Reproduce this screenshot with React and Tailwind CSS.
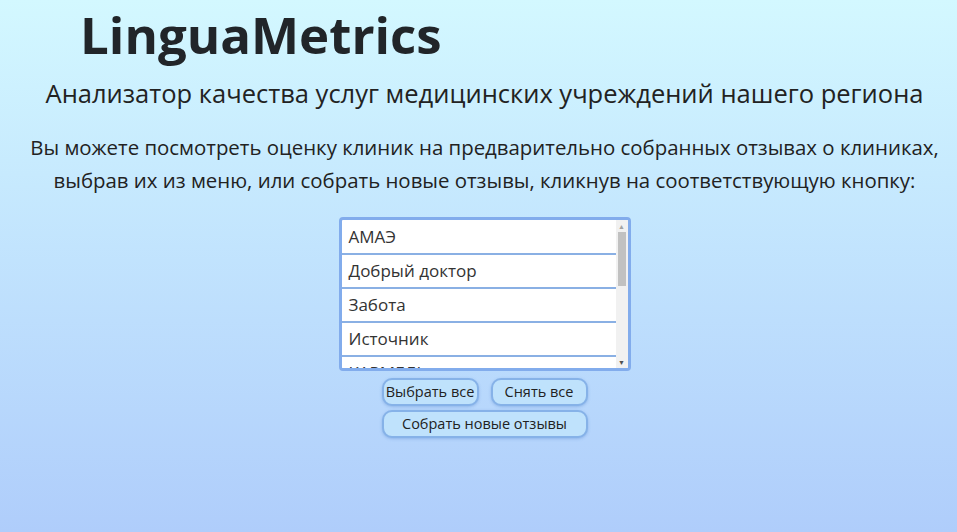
import React, { useState } from 'react';

const clinics = ['АМАЭ', 'Добрый доктор', 'Забота', 'Источник', 'КАРМЕЛЬ', 'Мать и дитя', 'Семейная'];

const ClinicList = ({ selected, onToggle }) => {
  return (
    <div className="flex w-[292px] h-[154px] bg-white border-[3px] border-[#82acec] rounded-[4px] overflow-hidden">
      <div className="flex-1 pt-[1px] overflow-hidden">
        {clinics.map((name) => (
          <div
            key={name}
            onClick={() => onToggle(name)}
            className={`h-[34px] flex items-center pl-[7px] border-b-2 border-[#8ab0e4] text-[17px] text-[#333] cursor-pointer ${
              selected.includes(name) ? 'bg-[#dbeafe]' : 'bg-white'
            }`}
          >
            {name}
          </div>
        ))}
      </div>
      {/* scrollbar */}
      <div className="w-[12px] flex flex-col bg-[#f1f1f1]">
        <div className="h-[12px] flex items-center justify-center text-[7px] text-[#a3a3a3] leading-none">▲</div>
        <div className="mx-[2px] h-[54px] bg-[#c1c1c1]" />
        <div className="flex-1" />
        <div className="h-[12px] flex items-center justify-center text-[7px] text-[#505050] leading-none">▼</div>
      </div>
    </div>
  );
};

const PillButton = ({ children, className = '', onClick }) => (
  <button
    type="button"
    onClick={onClick}
    className={`h-[28px] p-0 bg-[#bfe2fc] border-2 border-[#86b2e8] rounded-[10px] text-[14.5px] leading-[20px] whitespace-nowrap text-[#222] shadow-[0_1px_3px_rgba(70,120,200,0.35)] hover:bg-[#a9d6fa] transition-colors ${className}`}
  >
    {children}
  </button>
);

const App = () => {
  const [selected, setSelected] = useState([]);

  const handleToggle = (name) => {
    setSelected(
      selected.includes(name) ? selected.filter((n) => n !== name) : [...selected, name]
    );
  };

  return (
    <div
      className="min-h-[532px] bg-gradient-to-b from-[#d3f8ff] to-[#afcdfb] text-[#222]"
      style={{ fontFamily: '"Segoe UI", "Open Sans", "Noto Sans", sans-serif' }}
    >
      <div className="pl-[12px]">
        <h1 className="pl-[68px] pt-[4px] text-[51px] font-bold leading-[60px] text-[#212529]">
          LinguaMetrics
        </h1>

        <h2 className="mt-[12px] text-center text-[25.5px] leading-[34px] text-[#222]">
          Анализатор качества услуг медицинских учреждений нашего региона
        </h2>

        <p className="mt-[21px] text-center text-[20.4px] leading-[33px] text-[#222]">
          Вы можете посмотреть оценку клиник на предварительно собранных отзывах о клиниках,
          <br />
          выбрав их из меню, или собрать новые отзывы, кликнув на соответствующую кнопку:
        </p>

        <div className="mt-[20px] flex flex-col items-center">
          <ClinicList selected={selected} onToggle={handleToggle} />

          <div className="mt-[7px] flex flex-col gap-[4px] w-[206px]">
            <div className="flex justify-between">
              <PillButton className="w-[97px]" onClick={() => setSelected([...clinics])}>
                Выбрать все
              </PillButton>
              <PillButton className="w-[97px]" onClick={() => setSelected([])}>
                Снять все
              </PillButton>
            </div>
            <PillButton className="w-full">Собрать новые отзывы</PillButton>
          </div>
        </div>
      </div>
    </div>
  );
};

export default App;
